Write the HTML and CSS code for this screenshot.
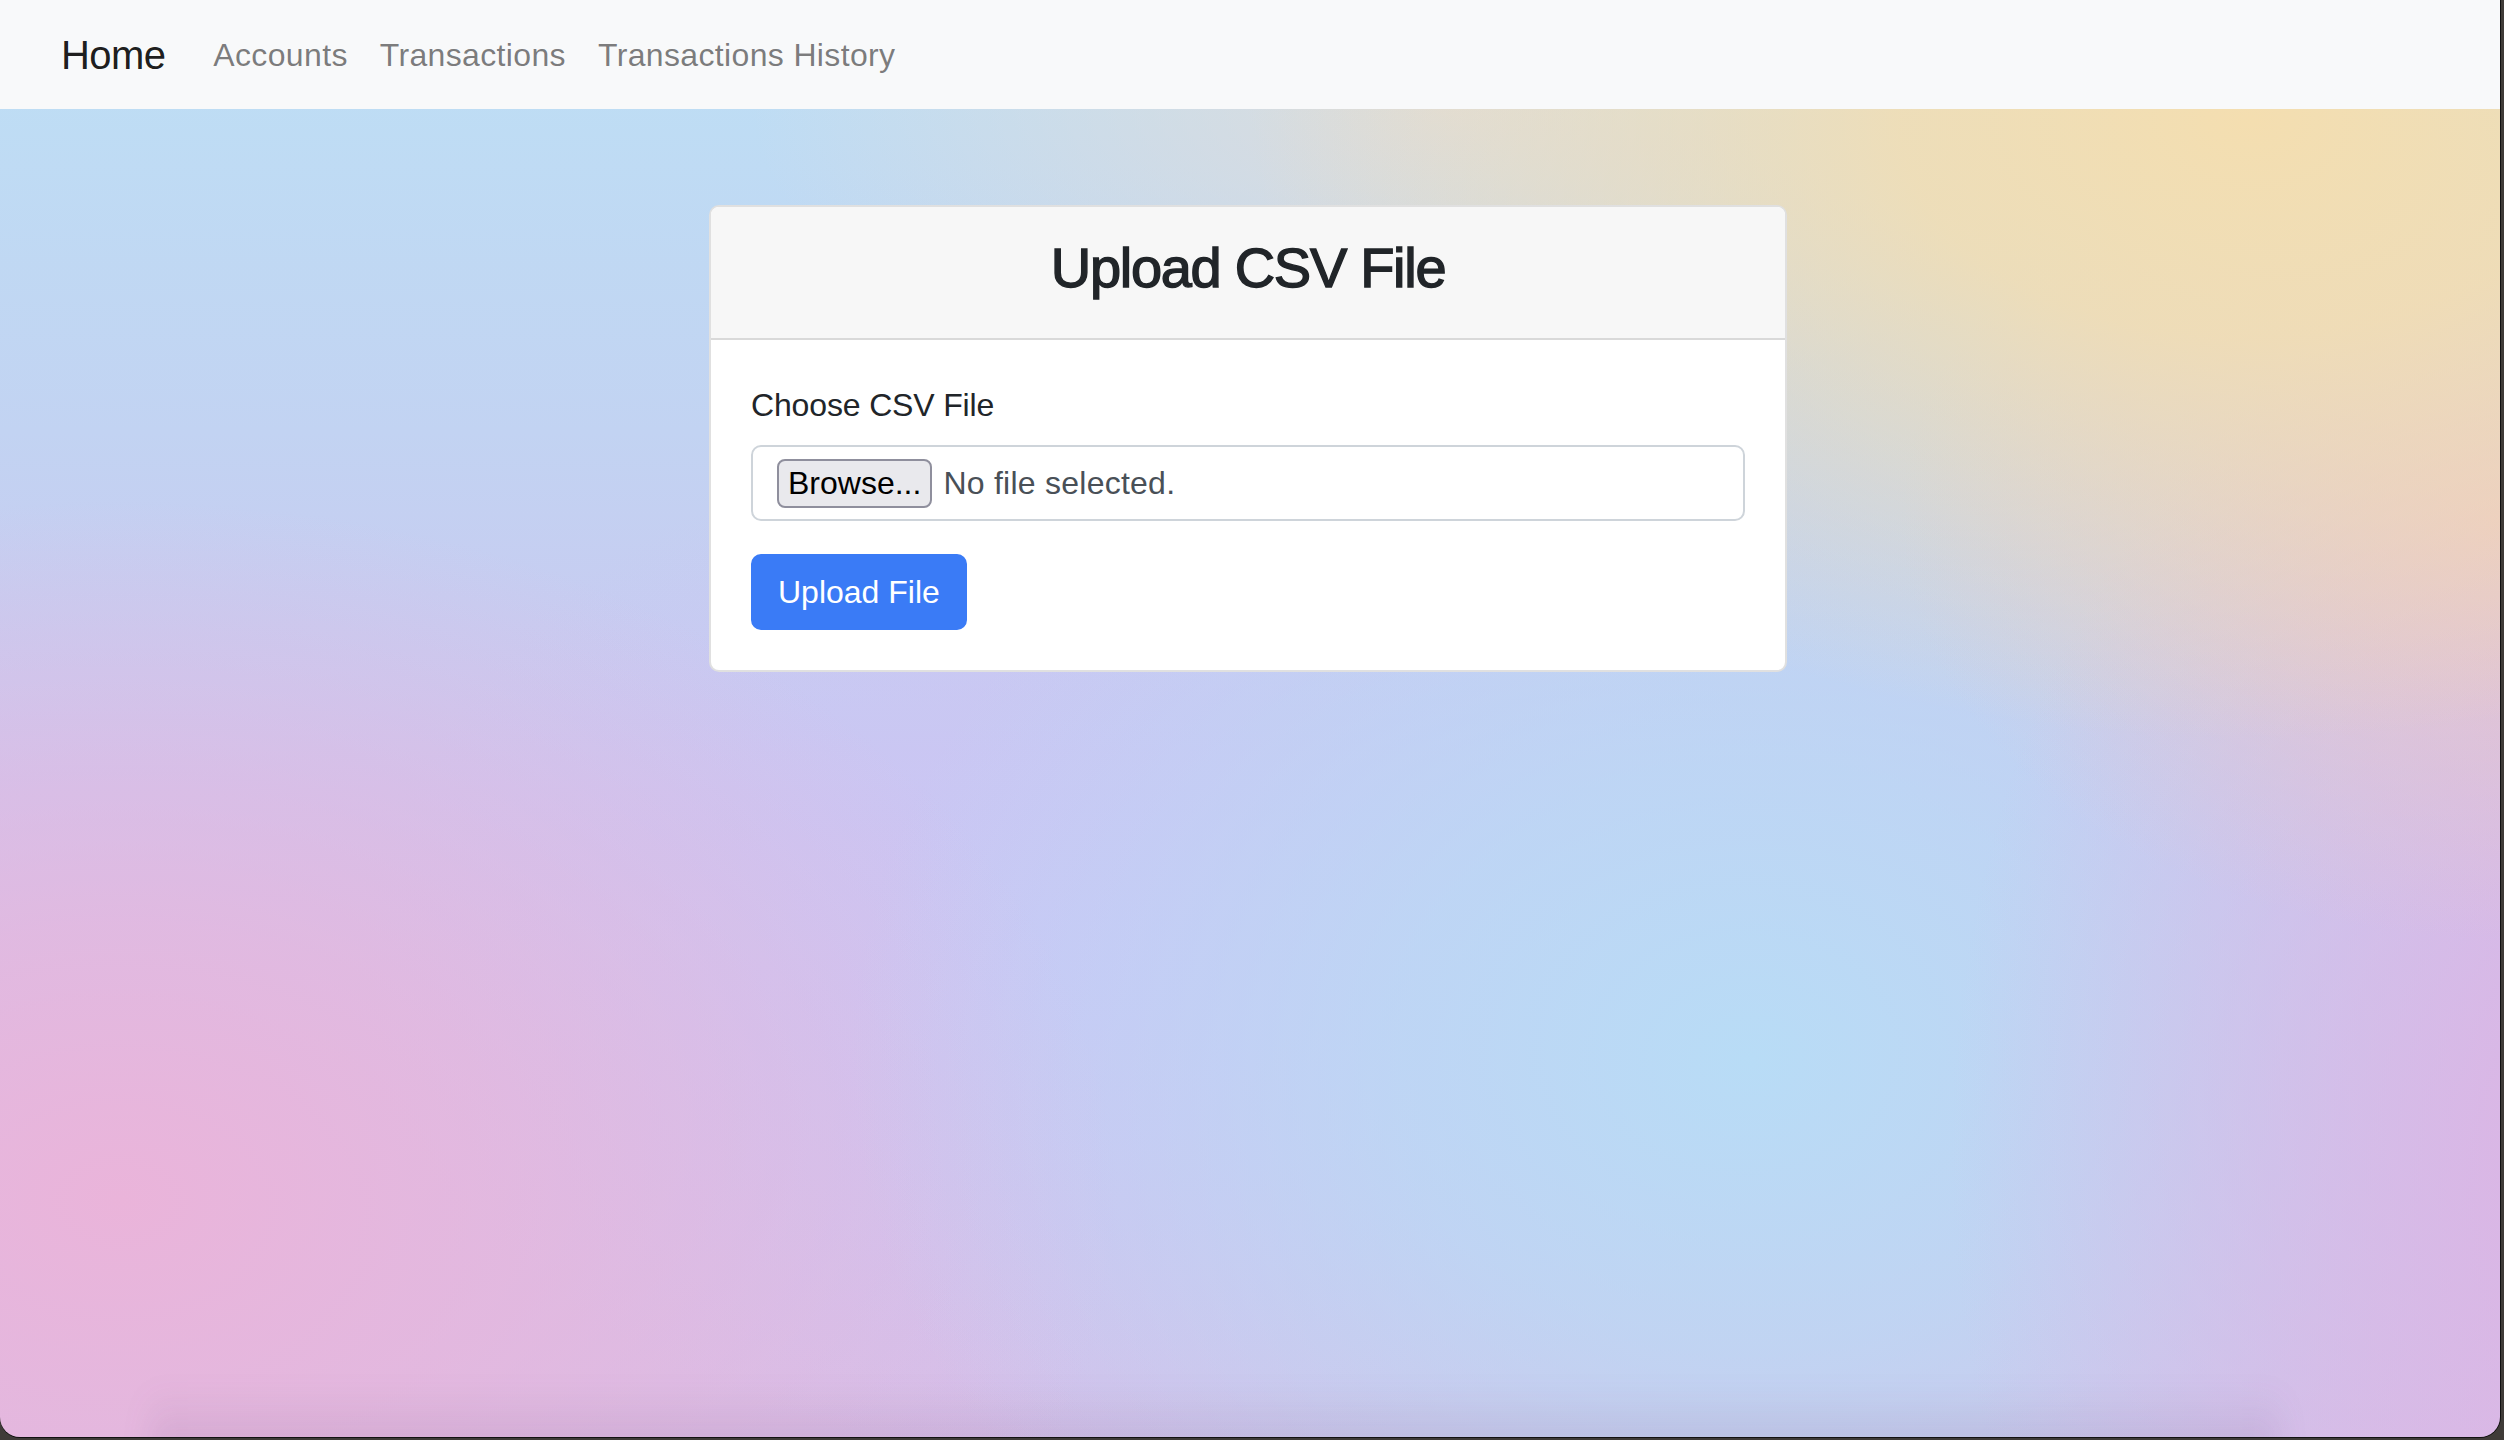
FILE: index.html
```html
<!DOCTYPE html>
<html lang="en">
<head>
<meta charset="utf-8">
<title>Upload CSV File</title>
<link rel="stylesheet" href="styles.css">
</head>
<body>
<div class="window">
  <nav class="navbar">
    <a class="brand" href="#">Home</a>
    <ul class="nav">
      <li><a class="nav-link" href="#">Accounts</a></li>
      <li><a class="nav-link" href="#">Transactions</a></li>
      <li><a class="nav-link" href="#">Transactions History</a></li>
    </ul>
  </nav>
  <main class="main">
    <div class="card">
      <div class="card-header">
        <h3 class="card-title">Upload CSV File</h3>
      </div>
      <div class="card-body">
        <form class="upload-form">
          <label class="form-label">Choose CSV File</label>
          <div class="file-input">
            <span class="browse">Browse...</span>
            <span class="file-name">No file selected.</span>
          </div>
          <button type="button" class="btn-primary">Upload File</button>
        </form>
      </div>
    </div>
  </main>
  <div class="bottom-shade"></div>
</div>
</body>
</html>
```
FILE: styles.css
```css
html, body {
  margin: 0;
  padding: 0;
}
body {
  width: 2504px;
  height: 1440px;
  overflow: hidden;
  background: #3f3b38;
  font-family: "Liberation Sans", Arial, sans-serif;
  color: #212529;
}
.window {
  position: relative;
  width: 2500px;
  height: 1437px;
  border-radius: 0 0 20px 20px;
  overflow: hidden;
  box-shadow: 1px 0 0 #111, 0 1px 0 #111;
  background:
    radial-gradient(ellipse 1000px 620px at 2250px 120px, rgba(244,222,176,1) 0%, rgba(244,222,176,0.85) 35%, rgba(244,222,176,0) 100%),
    radial-gradient(ellipse 600px 420px at 2500px 520px, rgba(236,200,196,0.9) 0%, rgba(236,200,196,0) 100%),
    radial-gradient(ellipse 700px 300px at 1450px 110px, rgba(228,220,214,0.8) 0%, rgba(228,220,214,0) 100%),
    radial-gradient(ellipse 650px 900px at 2600px 1150px, rgba(220,180,228,1) 0%, rgba(220,180,228,0) 100%),
    radial-gradient(ellipse 900px 720px at 1750px 1060px, rgba(184,220,246,1) 0%, rgba(184,220,246,0.7) 40%, rgba(184,220,246,0) 100%),
    radial-gradient(ellipse 1000px 700px at 120px 1200px, rgba(234,180,218,1) 0%, rgba(234,180,218,0.65) 40%, rgba(234,180,218,0) 100%),
    radial-gradient(ellipse 750px 520px at 1100px 950px, rgba(202,198,245,0.95) 0%, rgba(202,198,245,0) 100%),
    linear-gradient(180deg, #bde0f5 0%, #c2d3f2 30%, #cbc6f0 55%, #d6bfe8 100%);
}
.navbar {
  display: flex;
  align-items: center;
  height: 109px;
  padding-left: 61px;
  background: #f8f9fa;
}
.brand {
  font-size: 40px;
  line-height: 60px;
  color: rgba(0,0,0,0.9);
  text-decoration: none;
  margin-right: 32px;
  letter-spacing: -0.6px;
}
.nav {
  display: flex;
  list-style: none;
  margin: 0;
  padding: 0;
}
.nav-link {
  display: block;
  padding: 0 16px;
  font-size: 32px;
  line-height: 48px;
  letter-spacing: 0.35px;
  color: rgba(0,0,0,0.52);
  text-decoration: none;
}
.main {
  padding-top: 96px;
}
.card {
  width: 1074px;
  margin: 0 auto 0 709px;
  background: #fff;
  border: 2px solid rgba(0,0,0,0.12);
  border-radius: 10px;
  overflow: hidden;
}
.card-header {
  background: #f7f7f7;
  border-bottom: 2px solid rgba(0,0,0,0.12);
  padding: 27px 0 37px;
  text-align: center;
}
.card-title {
  margin: 0;
  font-size: 56px;
  line-height: 67px;
  font-weight: 400;
  letter-spacing: -1.3px;
  color: #212529;
  -webkit-text-stroke: 1.4px #212529;
}
.card-body {
  padding: 41px 40px 40px;
}
.upload-form {
  display: flex;
  flex-direction: column;
  align-items: flex-start;
}
.form-label {
  display: block;
  font-size: 32px;
  line-height: 48px;
  margin-bottom: 16px;
  letter-spacing: -0.15px;
  color: #212529;
}
.file-input {
  box-sizing: border-box;
  align-self: stretch;
  display: flex;
  align-items: center;
  height: 76px;
  padding: 0 24px;
  border: 2px solid #ced4da;
  border-radius: 10px;
  background: #fff;
}
.browse {
  box-sizing: border-box;
  height: 49px;
  padding: 0 9px;
  font-size: 32px;
  line-height: 45px;
  color: #000;
  background: #e9e9ed;
  border: 2px solid #8f8f9d;
  border-radius: 8px;
  margin-right: 11px;
}
.file-name {
  font-size: 32px;
  line-height: 48px;
  letter-spacing: 0.25px;
  color: #495057;
}
.btn-primary {
  margin-top: 33px;
  box-sizing: border-box;
  height: 76px;
  padding: 0 25px;
  font-family: "Liberation Sans", Arial, sans-serif;
  font-size: 32px;
  line-height: 48px;
  color: #fff;
  background: #3a7bf6;
  border: 2px solid #3a7bf6;
  border-radius: 10px;
}
.bottom-shade {
  position: absolute;
  left: 150px;
  right: 220px;
  bottom: -20px;
  height: 70px;
  background: linear-gradient(180deg, rgba(90,60,110,0) 0%, rgba(90,60,110,0.13) 100%);
  filter: blur(14px);
  pointer-events: none;
}
```
